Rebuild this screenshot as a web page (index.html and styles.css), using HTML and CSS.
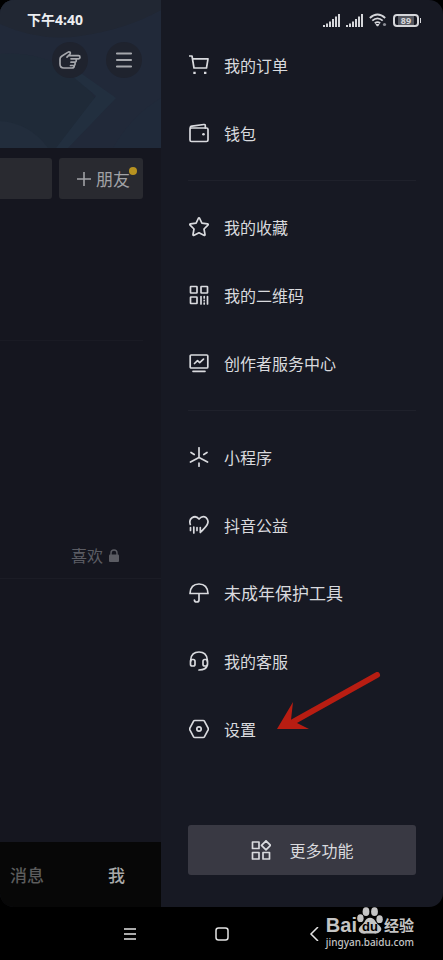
FILE: index.html
```html
<!DOCTYPE html>
<html lang="zh-CN">
<head>
<meta charset="utf-8">
<meta name="viewport" content="width=device-width, initial-scale=1">
<title>我</title>
<link rel="stylesheet" href="styles.css">
</head>
<body>
<header class="status">
  <time class="status-time">下午4:40</time>
  <div class="status-icons">
    <svg width="17" height="13" viewBox="0 0 17 13" fill="currentColor"><path d="M0 11h2v2H0zM3 9.500h2V13H3zM6 7.500h2V13H6zM9 5h2v8H9zM12 2.500h2V13h-2zM15 0h2v13h-2z"/></svg>
    <svg width="17" height="13" viewBox="0 0 17 13" fill="currentColor"><path d="M0 11h2v2H0zM3 9.500h2V13H3zM6 7.500h2V13H6zM9 5h2v8H9zM12 2.500h2V13h-2zM15 0h2v13h-2z"/></svg>
    <svg width="18" height="14" viewBox="0 0 18 14" fill="none" stroke="currentColor" stroke-width="1.800"><path d="M.8 5Q8.500-2 16.200 5M3.300 7.700q5.200-4.600 10.400 0M5.800 10.200q2.700-2.200 5.400 0"/><path d="M7 11.500l1.500 1.700 1.500-1.700z" fill="currentColor" stroke-width="1"/><circle cx="15.500" cy="11.500" r="1.600" fill="#8b8d95" stroke="none"/></svg>
    <span class="battery"><span>89</span></span>
  </div>
</header>

<div class="screen">
  <main class="profile">
    <div class="banner">
      <svg class="banner-art" viewBox="0 0 161 148" preserveAspectRatio="none">
        <path d="M0 0h161v10Q125 30 80 36 40 42 0 24z" fill="#212733"/>
        <path d="M0 54q60-5 95 44l-32 50H0z" fill="#1f2a38"/>
        <path d="M72 76l24 20-40 52h12l48-50-34-24z" fill="#222f3f"/>
        <path d="M0 121q30 2 48 27H0z" fill="#222d3c"/>
        <path d="M161 98q-30 18-48 50h48z" fill="#202a3a"/>
      </svg>
      <button class="round" aria-label="指向">
        <svg width="22" height="18" viewBox="0 0 22 18" fill="none" stroke="currentColor" stroke-width="1.700" stroke-linejoin="round" stroke-linecap="round"><path d="M8 6.200l3-3.200q.8-1.300-.3-1.900-1-.4-2 .3L2.600 5.200Q1 6.200 1 8v5q0 4 4 4h8q2.300 0 2.300-2.600M10.500 4.600h9q1.500 0 1.500 1.600t-1.500 1.600H12M17 8q.8 3-1 3.200h-4M16 11.500q.4 3-1.200 3H11.500"/></svg>
      </button>
      <button class="round" aria-label="菜单">
        <svg width="18" height="16" viewBox="0 0 18 16" stroke="currentColor" stroke-width="2.200" stroke-linecap="round"><path d="M2 1.500h14M2 8h14M2 14.500h14"/></svg>
      </button>
    </div>
    <div class="actions">
      <button class="action" aria-label="编辑资料"></button>
      <button class="action action-friend">
        <svg width="14" height="14" viewBox="0 0 14 14" stroke="currentColor" stroke-width="1.600"><path d="M7 0v14M0 7h14"/></svg>
        <span>朋友</span><span class="dot"></span>
      </button>
    </div>
    <div class="intro"></div>
    <div class="likes">喜欢
      <svg width="10" height="13" viewBox="0 0 10 13"><path d="M2 6V4q0-3 3-3t3 3v2" fill="none" stroke="currentColor" stroke-width="1.400"/><rect y="5.500" width="10" height="7.500" rx="1" fill="currentColor"/></svg>
    </div>
    <nav class="tabs">
      <a href="#messages">消息</a>
      <a href="#me" class="current">我</a>
    </nav>
  </main>

  <aside class="drawer">
    <nav>
      <ul class="group">
        <li><a href="#orders"><svg class="icon" viewBox="0 0 20 20"><path d="M.5 1H3l2 12h12.500L19 3.800H3.500"/><path class="solid" d="M4.300 16.700h2.400v2.400H4.300zM15 16.700h2.400v2.400H15z"/></svg>我的订单</a></li>
        <li><a href="#wallet"><svg class="icon" viewBox="0 0 20 20"><rect x="1" y="5" width="18" height="13.500" rx="1.500"/><path d="M1.300 5.500Q1 3.500 3 3.200L14.800 1.500q1.500-.2 1.500 1.300V5"/><circle class="solid" cx="14.500" cy="11.300" r="1.300"/></svg>钱包</a></li>
      </ul>
      <ul class="group">
        <li><a href="#favorites"><svg class="icon" viewBox="0 0 20 20"><path d="M10 .9q.4 0 .7.6l2.200 4.700 5.500.7q1.200.3.500 1.200L15 12l1 5.500q.1 1.300-1.100.8L10 15.800l-4.900 2.500q-1.200.5-1.100-.8L5 12 1.100 8.100q-.7-.9.500-1.200l5.500-.7 2.200-4.700Q9.600.9 10 .9z"/></svg>我的收藏</a></li>
        <li><a href="#qrcode"><svg class="icon" viewBox="0 0 20 20"><rect x="1.500" y="1.500" width="6.500" height="6.500" rx=".5"/><rect x="12" y="1.500" width="6.500" height="6.500" rx=".5"/><rect x="1.500" y="12" width="6.500" height="6.500" rx=".5"/><path d="M12 11.500v7.500M18.500 11.500v7.500M15.200 11.500v1.500M15.200 15.300v.4M15.200 18v1"/></svg>我的二维码</a></li>
        <li><a href="#creator"><svg class="icon" viewBox="0 0 20 20"><rect x="1.200" y="2" width="17.600" height="13" rx="1"/><path d="M5.500 10.500l3-2.800 2.200 2 3.800-3.500M4 18.300h12"/></svg>创作者服务中心</a></li>
      </ul>
      <ul class="group">
        <li><a href="#mini"><svg class="icon" viewBox="0 0 20 20"><path d="M10 .8v9.700l8.500 4.600M10 10.500l-8.500 4.600M2 5.500l3.200 2M18 5.500l-3.200 2M10 16.200v3"/></svg>小程序</a></li>
        <li><a href="#charity"><svg class="icon" viewBox="0 0 20 20"><path d="M1.300 9.500Q-.2 5 3 2.800 7 .2 10 4q3.500-3.800 7.300-1.200 3 3 .8 7-1.600 2.700-6.800 7.700V12.500"/><path d="M1.500 12.500v3M4.800 12v6M8 12.500v3"/></svg>抖音公益</a></li>
        <li class="large"><a href="#minors"><svg class="icon" viewBox="0 0 20 20"><path d="M1 10.500Q1.500 1 10 1t9 9.500zM10 10.500V17q0 2-2.300 2T5.400 17"/></svg>未成年保护工具</a></li>
        <li><a href="#support"><svg class="icon" viewBox="0 0 20 20"><path d="M1.800 10V8.500Q2.500 1 10 1t8.200 7.500V10"/><rect x="1.500" y="8.500" width="4.500" height="6.500" rx="1.800"/><rect x="14" y="8.500" width="4.500" height="6.500" rx="1.800"/><path d="M18.200 14q-.8 5-8.200 5"/></svg>我的客服</a></li>
        <li><a href="#settings"><svg class="icon" viewBox="0 0 20 20"><path d="M5.800 1.500h8.400q.8 0 1.200.7l3.600 6.600q.6 1.200 0 2.400l-3.600 6.600q-.4.700-1.200.7H5.800q-.8 0-1.200-.7L1 11.200q-.6-1.200 0-2.400l3.600-6.600q.4-.7 1.200-.7z"/><circle cx="10" cy="10" r="2.200"/></svg>设置</a>
          <svg class="arrow" width="104" height="60" viewBox="0 0 104 60"><path d="M100 3L14 51" stroke="#b81d12" stroke-width="6" stroke-linecap="round"/><path d="M0 57L16 30l-2 18 18 9z" fill="#b81d12"/></svg>
        </li>
      </ul>
    </nav>
    <button class="more"><svg class="icon" viewBox="0 0 20 20"><rect x="1.500" y="2" width="6.500" height="6.500"/><rect x="1.500" y="12.500" width="6.500" height="6.500"/><rect x="12" y="12.500" width="6.500" height="6.500"/><path d="M15 .8l4.500 4.500L15 9.800l-4.500-4.500z"/></svg>更多功能</button>
  </aside>
</div>

<footer class="system">
  <button aria-label="最近任务"><svg width="14" height="14" viewBox="0 0 14 14"><path d="M1 2h12M1 7h12M1 12h12"/></svg></button>
  <button aria-label="主屏幕"><svg width="14" height="14" viewBox="0 0 14 14"><rect x="1" y="1" width="12" height="12" rx="2.500"/></svg></button>
  <button aria-label="返回"><svg width="14" height="14" viewBox="0 0 14 14"><path d="M11 0L4 7l7 7"/></svg></button>
  <div class="watermark">
    <div class="brand"><span>Bai</span><span class="paw"><svg width="26" height="28" viewBox="0 0 26 30" preserveAspectRatio="none" fill="currentColor"><ellipse cx="9" cy="5" rx="3.400" ry="4.700"/><ellipse cx="17.500" cy="5" rx="3.400" ry="4.700"/><ellipse cx="3.400" cy="12" rx="3.200" ry="4.200"/><ellipse cx="22.600" cy="13" rx="3.200" ry="4.200"/><path d="M13 11.500q3.500 0 5.500 4 1.500 2.500 4 4.500 3 3 1 6-2.200 3-6.500 2.500h-8Q4.500 29.500 2.500 26.500q-2-3 1-6 2.500-2 4-4.500 2-4.500 5.500-4.500z"/></svg><span class="du">du</span></span><span class="jy">经验</span></div>
    <div class="site">jingyan.baidu.com</div>
  </div>
</footer>
</body>
</html>
```

FILE: styles.css
```css
* { box-sizing: border-box; }

body {
  margin: 0;
  background: #000;
  color: #d9dade;
  font: 16px/24px "Noto Sans CJK SC", sans-serif;
  position: relative;
}

button {
  border: 0;
  padding: 0;
  color: inherit;
  font: inherit;
}

a { color: inherit; text-decoration: none; }
ul { list-style: none; margin: 0; padding: 0; }
svg { display: block; flex: none; }

.status {
  position: absolute;
  z-index: 1;
  inset: 0 0 auto;
  display: flex;
  justify-content: space-between;
  align-items: center;
  height: 40px;
  padding: 0 24px 0 27px;
}
.status-time {
  color: #eceef1;
  font-family: "Noto Sans", "Noto Sans CJK SC", sans-serif;
  font-size: 14px;
  font-weight: 700;
}
.status-icons { display: flex; align-items: center; gap: 6px; color: #d5d6da; }
.battery {
  position: relative;
  width: 26px;
  height: 13px;
  border: 2px solid;
  border-radius: 4px;
  font: 700 9px/9px "Noto Sans", sans-serif;
  text-align: center;
}
.battery span { display: block; margin: 0 3px; background: #55575f; }
.battery::after {
  content: "";
  position: absolute;
  top: 2px;
  right: -4px;
  width: 1px;
  height: 5px;
  background: currentColor;
}

.screen {
  display: grid;
  grid-template-columns: 4fr 7fr;
  border-radius: 14px;
  overflow: hidden;
}

.profile { display: flex; flex-direction: column; background: #15161f; min-width: 0; }
.banner {
  position: relative;
  display: flex;
  justify-content: flex-end;
  gap: 18px;
  height: 148px;
  padding: 42px 19px 0 0;
  background: #212939;
}
.banner-art { position: absolute; inset: 0; width: 100%; height: 100%; }
.round {
  position: relative;
  display: grid;
  place-items: center;
  width: 36px;
  height: 36px;
  border-radius: 50%;
  background: #1f232e;
  color: #a5a7ac;
}
.actions { display: grid; grid-template-columns: 5fr 8fr; gap: 7px; padding: 10px 18px 0 0; }
.action {
  height: 41px;
  border-radius: 0 3px 3px 0;
  background: #292a30;
}
.action-friend {
  position: relative;
  display: flex;
  align-items: center;
  justify-content: flex-end;
  gap: 5px;
  padding-right: 13px;
  border-radius: 3px;
  color: #a1a2a6;
  font-size: 17px;
}
.action-friend span { white-space: nowrap; }
.dot {
  position: absolute;
  top: 9px;
  right: 6px;
  width: 8px;
  height: 8px;
  border-radius: 50%;
  background: #b79220;
}
.intro { height: 142px; margin-right: 18px; border-bottom: 1px solid #1a1b24; }
.likes {
  display: flex;
  align-items: center;
  justify-content: flex-end;
  gap: 6px;
  margin-top: 193px;
  padding: 9px 42px 11px;
  border-bottom: 1px solid #1b1c25;
  color: #5b5c63;
}
.tabs {
  display: flex;
  justify-content: space-between;
  align-items: center;
  height: 65px;
  margin-top: auto;
  padding: 0 36px 0 10px;
  background: #070707;
  color: #5c5c5c;
  font-size: 17px;
  font-weight: 500;
}
.tabs .current { color: #a9a9a9; }

.drawer {
  padding: 31px 27px 32px;
  background: #171923;
}
.group + .group { margin-top: 13px; border-top: 1px solid #1f212b; padding-top: 12px; }
.group li { position: relative; }
.group a { display: flex; align-items: center; gap: 15px; height: 68px; padding-left: 1px; }
.group .large { font-size: 17px; }
.icon {
  width: 20px;
  height: 20px;
  fill: none;
  stroke: currentColor;
  stroke-width: 1.7;
  stroke-linejoin: round;
  stroke-linecap: round;
}
.icon .solid { fill: currentColor; stroke: none; }
.arrow { position: absolute; left: 89px; bottom: 31px; }
.more {
  display: flex;
  align-items: center;
  justify-content: center;
  gap: 19px;
  width: 100%;
  height: 50px;
  margin-top: 62px;
  border-radius: 3px;
  background: #393943;
}

.system {
  position: relative;
  display: flex;
  justify-content: center;
  align-items: center;
  gap: 78px;
  height: 53px;
}
.system button { width: 14px; background: none; color: #e3e3e3; }
.system button svg { fill: none; stroke: currentColor; stroke-width: 1.5; }
.watermark {
  position: absolute;
  right: 29px;
  bottom: 11px;
  color: #c4c4c4;
}
.brand { display: flex; align-items: flex-end; font: 700 20px/20px "Liberation Sans", sans-serif; }
.paw { position: relative; }
.du {
  position: absolute;
  inset: auto 0 1px;
  color: #000;
  font-size: 13px;
  line-height: 14px;
  text-align: center;
}
.jy { margin-left: 1px; font: 700 15px/20px "Noto Sans CJK SC", sans-serif; }
.site { font: 500 10px/14px "Noto Sans", sans-serif; }
```
